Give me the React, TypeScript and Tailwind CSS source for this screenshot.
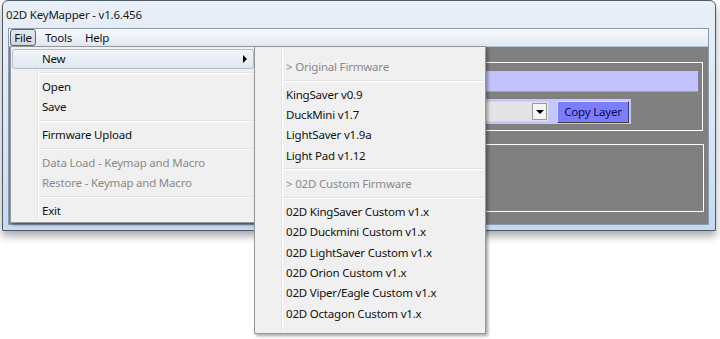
import React from 'react';

const font = { fontFamily: '"Noto Sans", "Liberation Sans", sans-serif' };

type Item = { label?: string; sep?: boolean; tight?: boolean; disabled?: boolean; active?: boolean; sub?: boolean };

const fileItems: Item[] = [
  { label: 'New', active: true, sub: true },
  { sep: true },
  { label: 'Open' },
  { label: 'Save' },
  { sep: true },
  { label: 'Firmware Upload' },
  { sep: true },
  { label: 'Data Load - Keymap and Macro', disabled: true },
  { label: 'Restore - Keymap and Macro', disabled: true },
  { sep: true },
  { label: 'Exit' },
];

const newItems: Item[] = [
  { label: '> Original Firmware', disabled: true },
  { sep: true, tight: true },
  { label: 'KingSaver v0.9' },
  { label: 'DuckMini v1.7' },
  { label: 'LightSaver v1.9a' },
  { label: 'Light Pad v1.12' },
  { sep: true },
  { label: '> 02D Custom Firmware', disabled: true },
  { sep: true },
  { label: '02D KingSaver Custom v1.x' },
  { label: '02D Duckmini Custom v1.x' },
  { label: '02D LightSaver Custom v1.x' },
  { label: '02D Orion Custom v1.x' },
  { label: '02D Viper/Eagle Custom v1.x' },
  { label: '02D Octagon Custom v1.x' },
];

function MenuRows({ items, rowClass }: { items: Item[]; rowClass: string }) {
  return (
    <>
      {items.map((it, i) =>
        it.sep ? (
          <div key={i} className={(it.tight ? 'h-[7px]' : 'h-[8px]') + ' flex items-center pl-[27px]'}>
            <div className="flex-1 h-[2px] border-t border-[#e0e0e0] border-b border-b-white" />
          </div>
        ) : (
          <div
            key={i}
            className={
              'relative flex items-center pl-[29px] pr-2 rounded-[3px] border ' +
              rowClass +
              ' ' +
              (it.active
                ? 'border-[#aebfd3] bg-gradient-to-b from-[#f2f5f9] to-[#dfe7f0]'
                : 'border-transparent')
            }
          >
            <span className={it.disabled ? 'text-[#8a8a8a]' : 'text-[#111]'}>{it.label}</span>
            {it.sub && (
              <span className="absolute right-[6px] top-1/2 -translate-y-1/2 w-0 h-0 border-y-[4px] border-y-transparent border-l-[4px] border-l-black" />
            )}
          </div>
        )
      )}
    </>
  );
}

export default function App() {
  return (
    <div
      className="relative w-[720px] h-[339px] bg-white overflow-hidden text-[11.5px] tracking-[-0.2px] leading-none"
      style={font}
    >
      {/* window */}
      <div className="ml-[2px] w-[714px] h-[231px] border border-[#4f5a68] rounded-t-[6px] bg-gradient-to-b from-[#e9eff7] via-[#dbe7f4] to-[#c4daf1] shadow-[0_5px_9px_rgba(0,0,0,0.35)] flex flex-col">
        <div className="h-[27px] flex items-center pl-[3px] text-[11.5px] text-[#1a1a1a]">
          02D KeyMapper - v1.6.456
        </div>
        <div className="ml-[5px] w-[701px] flex-1 mb-[5px] border border-[#8b9bb0] flex flex-col">
          {/* menubar */}
          <div className="h-[18px] flex items-center pl-[1px] bg-gradient-to-b from-[#f7f9fc] to-[#e2e9f2] border-b border-[#b9c4d2]">
            <div className="h-[17px] w-[26px] flex items-center justify-center rounded-[3px] border border-[#5d6670] bg-gradient-to-b from-[#e4e9ef] to-[#cfd7e1] text-[#111]">
              File
            </div>
            <div className="ml-[9px] text-[#111]">Tools</div>
            <div className="ml-[13px] text-[#111]">Help</div>
          </div>
          {/* client */}
          <div className="flex-1 bg-[#808080] flex flex-col pl-[5px] pr-[4px] pt-[15px]">
            <div className="h-[69px] mr-[1px] border border-white flex flex-col px-[4px] pt-[8px]">
              <div className="h-[21px] bg-[#c2c2ff] border-b border-[#9c9cd0]" />
              <div className="mt-[7px] h-[25px] w-[612px] bg-[#c6c6ff] flex items-center gap-[8px] pl-[2px] pr-[2px]">
                <div className="flex-1 h-[21px] bg-[#e4e4e4] border border-[#d0d0e8] flex justify-end items-center pr-[1px]">
                  <div className="w-[15px] h-[17px] bg-[#f4f4f4] border border-[#9a9a9a] flex items-center justify-center">
                    <span className="w-0 h-0 border-x-[4px] border-x-transparent border-t-[4px] border-t-black" />
                  </div>
                </div>
                <div className="w-[72px] h-[22px] bg-[#7c7cff] border border-[#dcdcff] border-r-[#404040] border-b-[#404040] flex items-center justify-center text-[#0a0a50]">
                  Copy Layer
                </div>
              </div>
            </div>
            <div className="mt-[13px] h-[68px] border border-white" />
          </div>
        </div>
      </div>

      {/* File menu */}
      <div className="absolute left-[10px] top-[46px] w-[246px] h-[177px] bg-[#f0f0f0] border border-[#979797] shadow-[2px_2px_3px_rgba(0,0,0,0.35)] py-[2px] px-[1px]">
        <div className="absolute left-[26px] top-[2px] bottom-[2px] w-[2px] border-l border-[#e2e3e3] border-r border-r-white" />
        <div className="relative">
          <MenuRows items={fileItems} rowClass="h-[20px]" />
        </div>
      </div>

      {/* New submenu */}
      <div className="absolute left-[254px] top-[46px] w-[232px] h-[288px] bg-[#f0f0f0] border border-[#979797] shadow-[2px_2px_3px_rgba(0,0,0,0.35)] pt-[10px] px-[1px]">
        <div className="absolute left-[26px] top-[2px] bottom-[2px] w-[2px] border-l border-[#e2e3e3] border-r border-r-white" />
        <div className="relative">
          <MenuRows items={newItems} rowClass="h-[20.3px]" />
        </div>
      </div>
    </div>
  );
}
